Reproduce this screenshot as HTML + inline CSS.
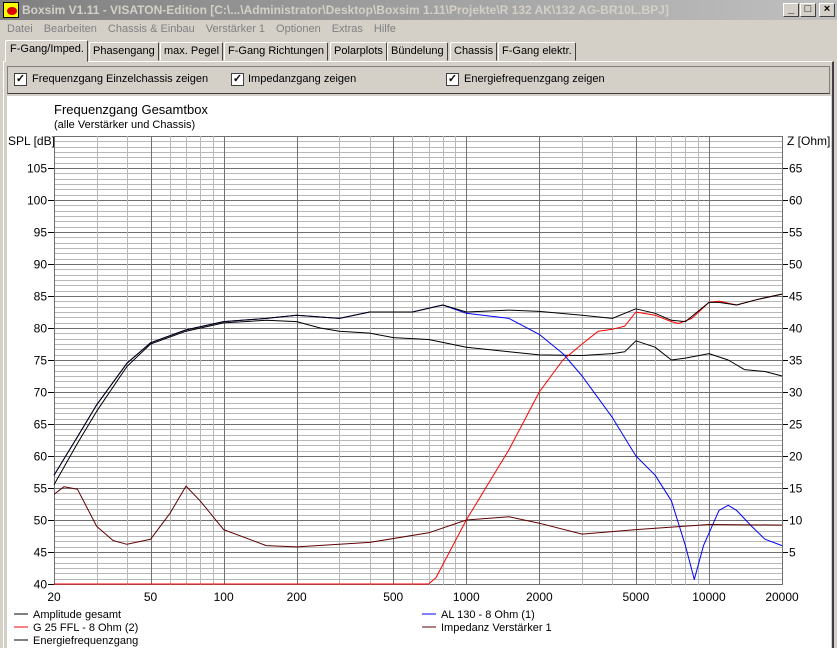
<!DOCTYPE html>
<html><head><meta charset="utf-8"><style>
*{margin:0;padding:0;box-sizing:border-box}
body{width:837px;height:648px;background:#d4d0c8;font-family:"Liberation Sans",sans-serif;font-size:11px;position:relative;overflow:hidden;color:#000}
.title{position:absolute;left:0;top:0;width:837px;height:20px;background:linear-gradient(90deg,#808080,#c0c0c0);color:#d4d0c8;font-weight:bold;font-size:12px;line-height:20px;padding-left:22px}
.ico{position:absolute;left:3px;top:2px;width:16px;height:16px;background:#ff0;border:1px solid #000}
.ico:after{content:"";position:absolute;left:3px;top:4px;width:10px;height:8px;border-radius:50%;background:#d00}
.wb{position:absolute;top:3px;width:16px;height:14px;background:#d4d0c8;border:1px solid;border-color:#fff #404040 #404040 #fff;font-size:11px;line-height:11px;text-align:center;font-weight:bold}
.menu{position:absolute;top:20px;left:0;height:19px;line-height:19px;color:#808080;font-size:11px}
.menu span{margin:0 0 0 7px;margin-right:4px}
.tab{position:absolute;top:42px;height:19px;border:1px solid;border-color:#fff #404040 transparent #fff;border-radius:2px 2px 0 0;padding:0 3px;line-height:17px;font-size:11px;background:#d4d0c8}
.panel{position:absolute;left:3px;top:61px;width:831px;height:587px;border-top:1px solid #fff;border-left:1px solid #fff;border-right:2px solid #404040}
.chk{position:absolute;top:66px;left:7px;width:823px;height:28px;border:1px solid #808080;border-bottom-color:#404040}
.cb{position:absolute;top:73px;width:13px;height:13px;background:#fff;border:1px solid #404040;font-size:11px;line-height:11px;text-align:center;font-weight:bold}
.cl{position:absolute;top:73px;font-size:11px}
.white{position:absolute;left:7px;top:96px;width:824px;height:552px;background:#fff}
svg{position:absolute;left:0;top:0}
</style></head><body>
<div class="title"><div class="ico"></div>Boxsim V1.11 - VISATON-Edition [C:\...\Administrator\Desktop\Boxsim 1.11\Projekte\R 132 AK\132 AG-BR10L.BPJ]</div>
<div class="wb" style="left:783px">_</div><div class="wb" style="left:800px">□</div><div class="wb" style="left:819px">×</div>
<div class="menu"><span>Datei</span><span>Bearbeiten</span><span>Chassis &amp; Einbau</span><span>Verstärker 1</span><span>Optionen</span><span>Extras</span><span>Hilfe</span></div>
<div class="panel"></div>
<div class="tab" style="left:5px;top:40px;height:22px;z-index:2;padding-left:4px">F-Gang/Imped.</div>
<div class="tab" style="left:89px">Phasengang</div>
<div class="tab" style="left:160px">max. Pegel</div>
<div class="tab" style="left:224px">F-Gang Richtungen</div>
<div class="tab" style="left:330px">Polarplots</div>
<div class="tab" style="left:387px">Bündelung</div>
<div class="tab" style="left:450px">Chassis</div>
<div class="tab" style="left:498px">F-Gang elektr.</div>
<div class="chk"></div>
<div class="cb" style="left:14px">✓</div><div class="cl" style="left:32px">Frequenzgang Einzelchassis zeigen</div>
<div class="cb" style="left:231px">✓</div><div class="cl" style="left:248px">Impedanzgang zeigen</div>
<div class="cb" style="left:446px">✓</div><div class="cl" style="left:464px">Energiefrequenzgang zeigen</div>
<div class="white"></div>
<svg id="s" width="837" height="648" font-family="Liberation Sans, sans-serif" font-size="12"></svg>
<script>
var s=document.getElementById('s'),h='';
function X(f){return 54+(Math.log10(f)-Math.log10(20))*728/3}
function Y(d){return 168+(105-d)*416/65}
h+='<text x="54" y="114" font-size="13">Frequenzgang Gesamtbox</text><text x="54" y="128" font-size="11">(alle Verstärker und Chassis)</text>';
h+='<text x="8" y="145">SPL [dB]</text><text x="787" y="145">Z [Ohm]</text>';
for(var k=0;k<=84;k++){var d=40+k*5/6;var y=Math.round(Y(d))+.5;var maj=(k%6==0);if(y<136)continue;
h+='<line x1="54" x2="782" y1="'+y+'" y2="'+y+'" stroke="'+(maj?'#707070':'#b8b8b8')+'"/>';
var dd=Math.round(d);
if(maj&&dd<110){h+='<text x="47" y="'+(y+4)+'" text-anchor="end">'+dd+'</text><line x1="48" x2="54" y1="'+y+'" y2="'+y+'" stroke="#000"/>';
if(dd>40)h+='<text x="789" y="'+(y+4)+'">'+(dd-40)+'</text><line x1="782" x2="788" y1="'+y+'" y2="'+y+'" stroke="#000"/>';}}
var lab=[20,50,100,200,500,1000,2000,5000,10000,20000];
for(var dec=10;dec<=10000;dec*=10)for(var m=1;m<=9;m++){var f=dec*m;if(f<20||f>20000)continue;var x=Math.round(X(f))+.5;var big=lab.indexOf(f)>=0;
h+='<line x1="'+x+'" x2="'+x+'" y1="136" y2="585" stroke="'+(big?'#707070':'#b8b8b8')+'"/>';}
h+='<line x1="782.5" x2="782.5" y1="136" y2="585" stroke="#707070"/>';
lab.forEach(function(f){h+='<text x="'+X(f)+'" y="601" text-anchor="middle">'+f+'</text>'});
function P(a,c,w){var p='';for(var i=0;i<a.length;i+=2)p+=(i?'L':'M')+X(a[i]).toFixed(1)+' '+Y(a[i+1]).toFixed(1);h+='<path d="'+p+'" fill="none" stroke="'+c+'" stroke-width="'+(w||1)+'" stroke-linejoin="round"/>';}
P([20,55.5,25,62,30,67,40,74,50,77.5,70,79.5,100,80.8,150,81.2,200,81,250,80,300,79.5,400,79.2,500,78.5,700,78.2,1000,77,1500,76.3,2000,75.8,3000,75.7,4000,76,4500,76.3,5000,78,6000,77,7000,75,8000,75.3,10000,76,12000,75,14000,73.5,17000,73.2,20000,72.5],'#000');
P([20,40,700,40,750,41,1000,50,1500,61,2000,70,2500,75,3000,77.5,3500,79.5,4000,79.8,4500,80.3,5000,82.5,6000,82,7000,81,7500,80.7,8500,81.5,10000,84,11000,84.2,13000,83.6,16000,84.5,20000,85.3],'#f00');
P([20,57,25,63,30,68,40,74.5,50,77.7,70,79.7,100,81,150,81.5,200,82,300,81.5,400,82.5,600,82.5,800,83.6,1000,82.3,1500,81.5,2000,79,2500,76,3000,72.5,4000,66,5000,60,6000,57,7000,53,8000,46,8700,40.7,9500,46,11000,51.5,12000,52.3,13000,51.5,15000,49,17000,47,20000,46],'#00f');
P([20,57,25,63,30,68,40,74.5,50,77.7,70,79.7,100,81,150,81.5,200,82,300,81.5,400,82.5,600,82.5,800,83.6,1000,82.5,1500,82.8,2000,82.6,3000,82,4000,81.5,5000,83,6000,82.3,7000,81.2,8000,81,10000,84,11000,84,13000,83.6,16000,84.5,20000,85.3],'#000');
P([20,54,22,55.2,25,54.8,30,49,35,46.8,40,46.2,50,47,60,51,70,55.3,80,53,100,48.5,150,46,200,45.8,400,46.5,700,48,1000,50,1500,50.5,2000,49.5,3000,47.8,5000,48.5,10000,49.3,20000,49.2],'#600000');
function L(x,y,c,t){h+='<line x1="'+x+'" x2="'+(x+14)+'" y1="'+y+'" y2="'+y+'" stroke="'+c+'"/><text x="'+(x+19)+'" y="'+(y+4)+'" font-size="11">'+t+'</text>'}
L(14,614,'#000','Amplitude gesamt');L(14,627,'#f00','G 25 FFL - 8 Ohm (2)');L(14,640,'#000','Energiefrequenzgang');
L(422,614,'#00f','AL 130 - 8 Ohm (1)');L(422,627,'#600000','Impedanz Verstärker 1');
s.innerHTML=h;
</script>
</body></html>
